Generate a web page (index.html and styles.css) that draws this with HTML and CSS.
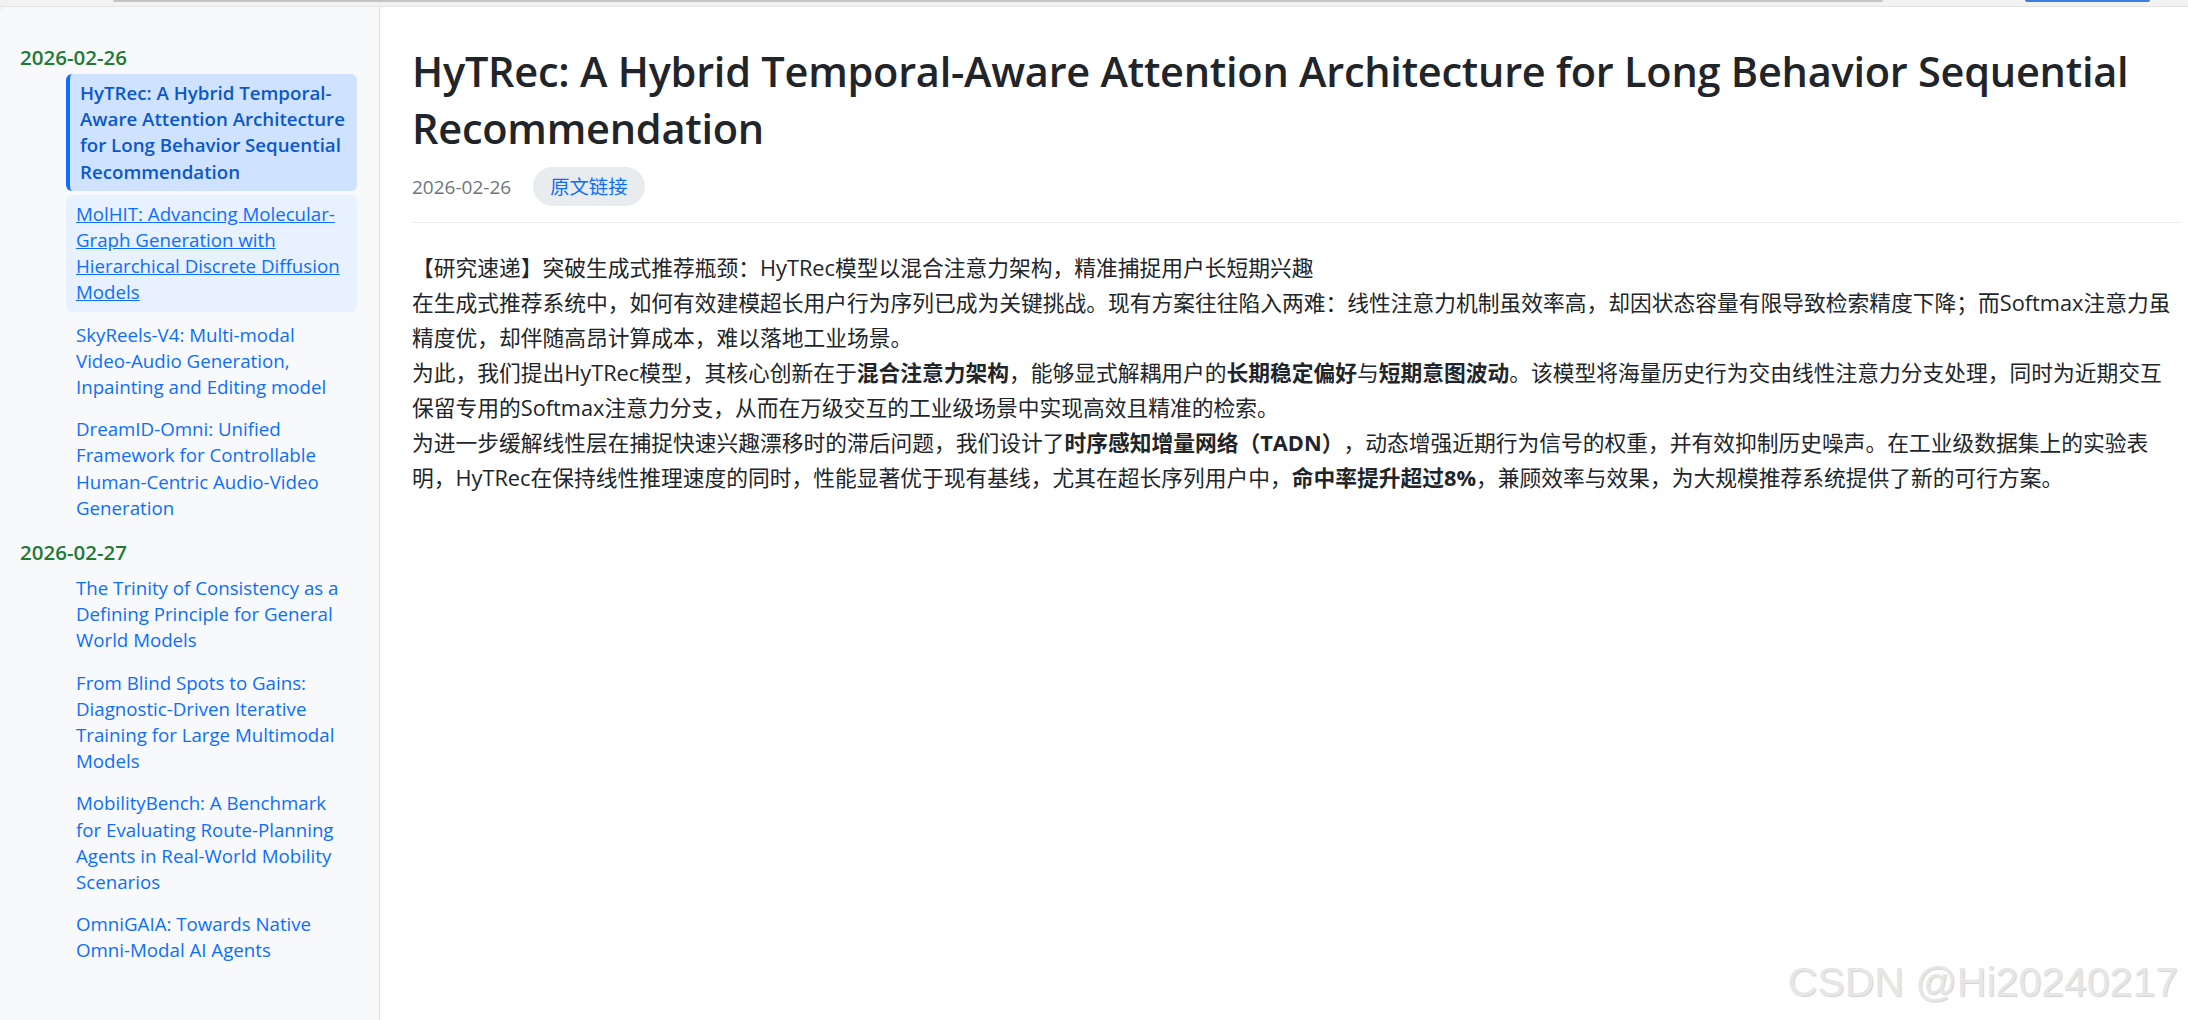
FILE: index.html
```html
<!DOCTYPE html>
<html lang="zh-CN">
<head>
<meta charset="utf-8">
<title>HyTRec</title>
<link rel="stylesheet" href="styles.css">
</head>
<body>
<div class="topbar">
  <div class="search-edge"></div>
  <div class="btn-edge"></div>
</div>
<div class="layout">
  <aside class="sidebar">
    <section class="day">
      <h3 class="day-date">2026-02-26</h3>
      <ul class="day-list">
        <li><a class="item active" href="#">HyTRec: A Hybrid Temporal-Aware Attention Architecture for Long Behavior Sequential Recommendation</a></li>
        <li><a class="item hover" href="#">MolHIT: Advancing Molecular-Graph Generation with Hierarchical Discrete Diffusion Models</a></li>
        <li><a class="item" href="#">SkyReels-V4: Multi-modal Video-Audio Generation, Inpainting and Editing model</a></li>
        <li><a class="item" href="#">DreamID-Omni: Unified Framework for Controllable Human-Centric Audio-Video Generation</a></li>
      </ul>
    </section>
    <section class="day">
      <h3 class="day-date">2026-02-27</h3>
      <ul class="day-list">
        <li><a class="item" href="#">The Trinity of Consistency as a Defining Principle for General World Models</a></li>
        <li><a class="item" href="#">From Blind Spots to Gains: Diagnostic-Driven Iterative Training for Large Multimodal Models</a></li>
        <li><a class="item" href="#">MobilityBench: A Benchmark for Evaluating Route-Planning Agents in Real-World Mobility Scenarios</a></li>
        <li><a class="item" href="#">OmniGAIA: Towards Native Omni-Modal AI Agents</a></li>
      </ul>
    </section>
  </aside>
  <main class="main">
    <header class="article-head">
      <h1 class="title">HyTRec: A Hybrid Temporal-Aware Attention Architecture for Long Behavior Sequential Recommendation</h1>
      <div class="meta">
        <span class="meta-date">2026-02-26</span>
        <a class="chip" href="#">原文链接</a>
      </div>
    </header>
    <div class="summary">
      <p>【研究速递】突破生成式推荐瓶颈：HyTRec模型以混合注意力架构，精准捕捉用户长短期兴趣</p>
      <p>在生成式推荐系统中，如何有效建模超长用户行为序列已成为关键挑战。现有方案往往陷入两难：线性注意力机制虽效率高，却因状态容量有限导致检索精度下降；而Softmax注意力虽精度优，却伴随高昂计算成本，难以落地工业场景。</p>
      <p>为此，我们提出HyTRec模型，其核心创新在于<strong>混合注意力架构</strong>，能够显式解耦用户的<strong>长期稳定偏好</strong>与<strong>短期意图波动</strong>。该模型将海量历史行为交由线性注意力分支处理，同时为近期交互保留专用的Softmax注意力分支，从而在万级交互的工业级场景中实现高效且精准的检索。</p>
      <p>为进一步缓解线性层在捕捉快速兴趣漂移时的滞后问题，我们设计了<strong>时序感知增量网络（TADN）</strong>，动态增强近期行为信号的权重，并有效抑制历史噪声。在工业级数据集上的实验表明，HyTRec在保持线性推理速度的同时，性能显著优于现有基线，尤其在超长序列用户中，<strong>命中率提升超过8%</strong>，兼顾效率与效果，为大规模推荐系统提供了新的可行方案。</p>
    </div>
  </main>
</div>
<div class="watermark">CSDN @Hi20240217</div>
</body>
</html>
```

FILE: styles.css
```css
* { box-sizing: border-box; }

html, body {
  margin: 0;
  height: 100%;
}

body {
  font-family: "Open Sans", "Noto Sans", "Noto Sans CJK SC", sans-serif;
  background: #f2f2f2;
  overflow: hidden;
  position: relative;
}

.topbar {
  height: 7px;
  border-bottom: 1px solid #e3e3e3;
  display: flex;
  align-items: flex-start;
}

.search-edge {
  margin-left: 113px;
  width: 1770px;
  height: 2px;
  background: #c4c4c4;
  border-radius: 0 0 6px 6px;
}

.btn-edge {
  margin-left: 142px;
  width: 125px;
  height: 2px;
  background: #3b7de0;
  border-radius: 0 0 6px 6px;
}

.layout {
  display: flex;
  height: calc(100vh - 7px);
  background: #fff;
  border-top-left-radius: 8px;
  overflow: hidden;
}

/* Sidebar */
.sidebar {
  width: 380px;
  flex: none;
  background: #f8f9fa;
  border-right: 1px solid #dee2e6;
  padding: 35px 22px 0 20px;
}

.day + .day { margin-top: 10px; }

.day-date {
  margin: 0 0 2px;
  font-size: 20.5px;
  line-height: 30px;
  font-weight: 600;
  color: #217a35;
}

.day-list {
  list-style: none;
  margin: 0 0 0 46px;
  padding: 0;
  display: flex;
  flex-direction: column;
  gap: 4px;
}

.item {
  display: block;
  padding: 6px 10px;
  border-radius: 6px;
  font-size: 18.7px;
  line-height: 26.2px;
  color: #0d6efd;
  text-decoration: none;
}

.item.active {
  background: #cfe2ff;
  border-left: 4px solid #0d6efd;
  color: #0a58ca;
  font-weight: 600;
}

.item.hover {
  background: #e7f1ff;
  text-decoration: underline;
}

/* Main */
.main {
  flex: 1;
  min-width: 0;
  padding: 36px 9px 0 32px;
}

.title {
  margin: 0;
  font-size: 41.5px;
  line-height: 57.2px;
  letter-spacing: -0.25px;
  font-weight: 600;
  color: #212529;
}

.meta {
  display: flex;
  align-items: center;
  gap: 22px;
  margin-top: 10px;
  padding-bottom: 16px;
  border-bottom: 1px solid #e9ecef;
  margin-right: -2px;
}

.meta-date {
  font-size: 19px;
  color: #6c757d;
}

.chip {
  font-size: 19.36px;
  line-height: 27px;
  padding: 6px 17px;
  border-radius: 999px;
  background: #e9ecef;
  color: #0d6efd;
  text-decoration: none;
}

.summary {
  margin-top: 27px;
  font-size: 21.76px;
  line-height: 35px;
  color: #212529;
  text-spacing-trim: space-all;
}

.summary p { margin: 0; }

.summary strong { font-weight: 700; }

.watermark {
  position: absolute;
  right: 10px;
  top: 962px;
  font-family: "Liberation Sans", Arial, sans-serif;
  font-size: 41px;
  line-height: 41px;
  color: #e6e6e6;
  text-shadow: 1px 1px 1px rgba(0, 0, 0, 0.18);
  pointer-events: none;
}
```
